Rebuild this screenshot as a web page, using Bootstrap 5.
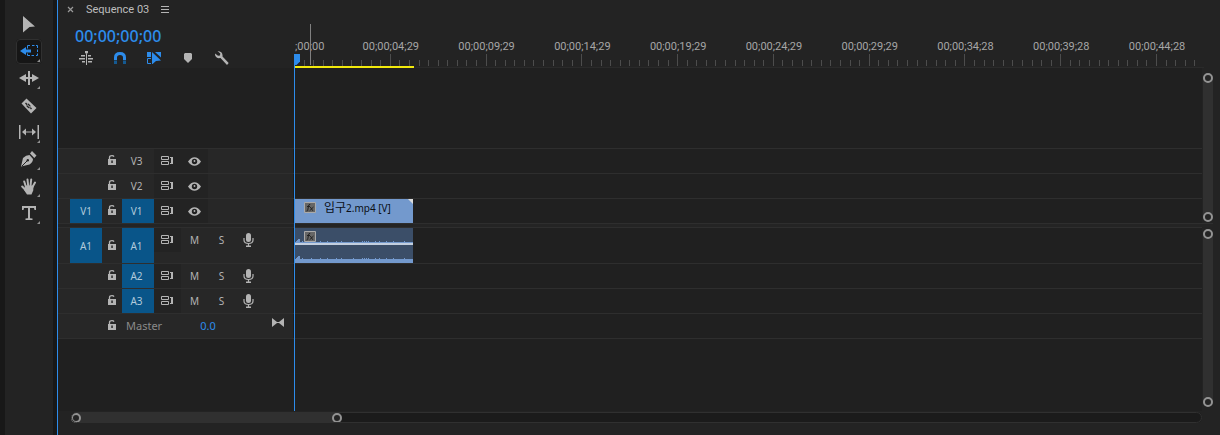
<!DOCTYPE html>
<html lang="en" data-bs-theme="dark">
<head>
<meta charset="utf-8">
<meta name="viewport" content="width=device-width, initial-scale=1">
<title>Sequence 03</title>
<link rel="stylesheet" href="https://cdn.jsdelivr.net/npm/bootstrap@5.3.0/dist/css/bootstrap.min.css">
<style>
:root{--panel:#232323;--lane:#202020;--edge:#2e2e2e;--ink:#b4b4b4;--blue:#2d8ceb;--target:#095589}
body{background:#181818;color:var(--ink);font:11px/16px "Noto Sans","Noto Sans CJK KR",sans-serif}
button{background:none;border:0;padding:0;color:inherit;display:flex;align-items:center;justify-content:center}
svg{display:block;fill:currentColor}
.tools{width:48px;margin:0 4px 0 5px;background:var(--panel);padding-top:12px;gap:2px}
.tool{width:26px;height:25px;border-radius:4px;position:relative}
.tool.active{background:#161616;outline:1px solid #303030;outline-offset:-1px;color:var(--blue)}
.tool.more::after{content:"";position:absolute;right:2px;bottom:2px;border:solid transparent;border-width:0 0 3px 3px;border-bottom-color:#909090}
.sequence{border-left:1px solid var(--blue);background:var(--panel);min-width:0}
.tabbar{height:18px;padding:1px 0 0 9px}
.tabbar a{color:#bdbdbd;font-family:Roboto,sans-serif}
.timeline{min-height:0}
.heads{width:236px}
.timecode{color:var(--blue);font-size:16px;font-weight:500;line-height:20px;padding:8px 0 0 17px}
.options{padding:3px 0 1px 11px}
.options button{width:34px;height:18px}
.on{color:var(--blue)}
.ruler{overflow:hidden;min-width:0;margin-right:16px;border-bottom:1px solid #2a2a2a}
.ticks{height:48px}
.tick{flex:1 1 0;border-left:1px solid #4c4c4c;height:6px;position:relative}
.tick.major{height:12px}
.tick time{position:absolute;bottom:11px;left:0;transform:translateX(-50%);white-space:nowrap;color:#a6a6a6;font-family:Roboto,sans-serif}
.tick:first-child time{transform:none}
.workbar{position:absolute;left:237px;top:48px;width:119px;height:2px;background:#f2ea0c}
.hover{position:absolute;left:252px;top:6px;width:1px;height:41px;background:#808080}
.playhead{position:absolute;left:236px;top:36px;bottom:0;width:1px;background:var(--blue)}
.playhead svg{color:var(--blue)}
.lanes{background:var(--lane);min-width:0}
.spare{height:80px}
.track{border-top:1px solid var(--edge);height:25px}
.track.tall{height:36px}
.track>.heads{display:grid;grid-template-columns:12px 32px 20px 32px 27px 27px 27px 27px 1fr;background:#272727;border-right:1px solid #1c1c1c}
.track button{color:var(--ink)}
.track .target{background:var(--target);color:#b2cadb}
.track .cell{height:24px}
.track .sync{background:var(--panel)}
.track .named,.track .letter{font-size:10px}
.track .name{padding-right:3px}
.divider{height:4px;border-top:1px solid var(--edge);background:#242424;margin-right:7px}
.clip{width:118px;margin-left:1px;position:relative;color:#0b0f16;background:#7399cd;overflow:hidden}
.clip .fx{position:absolute;left:9px;top:3px}
.clip span{padding-left:29px;line-height:17px;white-space:nowrap;font-size:10px}
.clip b{font-size:12px;font-weight:400}
.clip .corner{position:absolute;right:0;top:0}
.clip.audio{background:#3b4e68;color:#7399cd}
.master-name{color:#8a8a8a}
.side{width:18px;padding-left:1px}
.thumb{background:#303030;border-radius:6px}
.side .thumb{width:10px}
.side.top .thumb{margin:5px 0 1px}
.side.low .thumb{margin:2px 0 4px}
.knob{width:10px;height:10px;flex:none;border:2px solid #939393;border-radius:50%;background:#242424}
.hscroll{height:11px;margin:1px 18px 12px 13px;background:#1b1b1b;border-radius:6px;outline:1px solid #303030;outline-offset:-1px}
.hscroll .thumb{height:11px}
</style>
<script src="https://cdn.jsdelivr.net/npm/bootstrap@5.3.0/dist/js/bootstrap.bundle.min.js"></script>
</head>
<body class="d-flex vh-100 overflow-hidden">

<svg width="0" height="0" class="position-absolute" aria-hidden="true">
  <symbol id="lock" viewBox="0 0 10 12"><path d="M1 4h8v6H1z"/><path d="M2.500 4V2.500Q2.500.7 5 .7Q6.500.7 7 1.600" fill="none" stroke="currentColor" stroke-width="1.300"/><path d="M4.300 5.500h1.500v2.500H4.300z" fill="#272727"/></symbol>
  <symbol id="sync" viewBox="0 0 13 10"><path d="M.5.5h7v3h-7zM.5 5.500h7v3h-7z" fill="none" stroke="currentColor"/><path d="M9 1h3v7H9V7h1V2H9z"/></symbol>
  <symbol id="eye" viewBox="0 0 13 9"><path d="M0 4.500Q3 .2 6.500.2T13 4.500Q10 8.800 6.500 8.800T0 4.500z"/><circle cx="6.500" cy="4.500" r="2.700" fill="#202020"/><circle cx="6.500" cy="4" r=".9"/></symbol>
  <symbol id="mic" viewBox="0 0 11 14"><rect x="3" y="0" width="5" height="9" rx="2.500"/><path d="M1 5v2q0 3.500 4.500 3.500T10 7V5M5.500 10v3" fill="none" stroke="currentColor" stroke-width="1.200"/><path d="M3 12.500h5V14H3z"/></symbol>
  <symbol id="fx" viewBox="0 0 12 11"><path d="M.5.5h11v10H.5z" fill="#666" stroke="#aaa"/><path d="M6.200 2.500Q4.800 2 4.500 4L3.700 8.500Q3.400 9.300 2.500 9M3 4.500h3M6.300 5l2.500 3.800M9.500 5L5.600 8.800" fill="none" stroke="#222"/></symbol>
</svg>

<nav class="tools d-flex flex-column align-items-center flex-shrink-0" aria-label="Tools">
  <button class="tool" aria-label="Selection"><svg width="12" height="17" viewBox="0 0 12 17"><path d="M0 0L12 10.500L6.500 11L0 16.500z"/></svg></button>
  <button class="tool active more" aria-label="Track select backward"><svg width="18" height="13" viewBox="0 0 18 13"><path d="M0 6l6-4v2.500h5v3H6V10z"/><path d="M7.500 3.500V.5H10M12 .5h2.500M16 .5h1.500V3M17.500 4.500V7M17.500 8.500v2H16M14 10.500h-2.500M10 10.500H7.500v-2" fill="none" stroke="currentColor"/></svg></button>
  <button class="tool more" aria-label="Ripple edit"><svg width="20" height="15" viewBox="0 0 20 15"><path d="M9 0h2v14H9zM0 7l7-4v3h2v2H7v3zM20 7l-7-4v3h-2v2h2v3z"/></svg></button>
  <button class="tool" aria-label="Razor"><svg width="16" height="16" viewBox="0 0 16 16"><path d="M.5 5.500L5.500.5L15.500 10L10 15.500z"/><path d="M4 5.500l1-1 1.500 1.500 1-.5 2 2-.3 1L11 10.500l-1 1-1.600-1.600-1 .3-2-2 .3-1z" fill="#262626"/><path d="M6 6.500L9.500 9.800" stroke="currentColor"/></svg></button>
  <button class="tool more" aria-label="Slip"><svg width="20" height="15" viewBox="0 0 20 15"><path d="M0 0h1.500v14H0zM18.500 0H20v14h-1.500zM3 7l4-3.500v3h6v-3l4 3.500-4 3.500v-3H7v3z"/></svg></button>
  <button class="tool more" aria-label="Pen"><svg width="16" height="17" viewBox="0 0 16 17"><path d="M0 15.500L2 7Q5 4 8.500 4L12 8Q12 11 8.500 13.500zM9 2.500L11 0l4.500 4.500-2.200 2.500z"/><path d="M1 15L6 10" stroke="#232323"/><circle cx="6.800" cy="9.200" r="1.200" fill="#232323"/></svg></button>
  <button class="tool more" aria-label="Hand"><svg width="16" height="17" viewBox="0 0 16 17"><path d="M5 9L3.200 3.500M7.200 8L6.500 1.500M9.500 8L10.200 1.500M11.500 9L14 4.500M5 12.500L1.200 8.500" stroke="currentColor" stroke-width="2" stroke-linecap="round"/><path d="M4.200 7.500h8.400l-.4 5L10.500 16.500H6L3 12z"/></svg></button>
  <button class="tool more" aria-label="Type"><svg width="14" height="15" viewBox="0 0 14 15"><path d="M0 0h14v4h-1.500l-.5-2H8v10.200l2.500.4V14h-7v-1.400L6 12.200V2H2L1.500 4H0z"/></svg></button>
</nav>

<main class="sequence d-flex flex-column flex-grow-1">
  <div class="tabbar d-flex align-items-center">
    <button aria-label="Close"><svg width="7" height="7" viewBox="0 0 7 7"><path d="M1 1l5 5M6 1L1 6" stroke="#999" stroke-width="1.200"/></svg></button>
    <a href="#" class="text-decoration-none ms-2 ps-1">Sequence 03</a>
    <button class="ms-2 ps-1" aria-label="Panel menu"><svg width="8" height="7" viewBox="0 0 8 7"><path d="M0 0h8v1H0zM0 3h8v1H0zM0 6h8v1H0z"/></svg></button>
  </div>

  <div class="timeline d-flex flex-column flex-grow-1 position-relative">
    <div class="d-flex">
      <div class="heads flex-shrink-0">
        <div class="timecode">00;00;00;00</div>
        <div class="options d-flex">
          <button aria-label="Insert as nest"><svg width="14" height="14" viewBox="0 0 14 14"><path d="M7 1h1v13H7zM6 0h3v2l-1.500 1L6 2zM2 4h4v1.500H2zM0 7h6v1.500H0zM3 10h3v1.500H3zM9 4h3v1.500H9zM9 7h5v1.500H9zM9 10h4v1.500H9z"/></svg></button>
          <button class="on" aria-label="Snap"><svg width="12" height="12" viewBox="0 0 12 12"><path d="M1.500 8V5.500Q1.500 1.500 6 1.500T10.500 5.500V8" fill="none" stroke="currentColor" stroke-width="3"/><path d="M0 8.500h3V12H0zM9 8.500h3V12H9z" fill="#155a92"/></svg></button>
          <button class="on" aria-label="Linked selection"><svg width="14" height="12" viewBox="0 0 14 12"><path d="M0 0h4v5H0zM5 0L14 8.500l-5 .5-4 3.500zM7 0h7v5.500L8 0z"/><path d="M4 6.500H.5v5H4" fill="none" stroke="currentColor"/></svg></button>
          <button aria-label="Add marker"><svg width="8" height="10" viewBox="0 0 8 10"><path d="M1 0h6l1 1v5L4 10L0 6V1z"/></svg></button>
          <button aria-label="Timeline settings"><svg width="14" height="14" viewBox="0 0 14 14"><path d="M2.500 0l2.800 2.500-.3 2-2 .3L0 2.500Q-.2 6.500 3.500 7.200L5.500 7l6.500 7 1.700-2L7.500 5.500Q8.200.5 2.500 0z"/></svg></button>
        </div>
      </div>
      <div class="ruler flex-grow-1"><div class="ticks d-flex align-items-end" id="ticks"></div></div>
    </div>

    <section class="d-flex" aria-label="Video tracks">
      <div class="lanes flex-grow-1" id="video"><div class="spare"></div></div>
      <div class="side top d-flex"><div class="thumb d-flex flex-column justify-content-between"><button class="knob" aria-label="Video zoom top"></button><button class="knob" aria-label="Video zoom bottom"></button></div></div>
    </section>
    <div class="divider"></div>
    <section class="d-flex flex-grow-1" aria-label="Audio tracks">
      <div class="lanes flex-grow-1" id="audio"></div>
      <div class="side low d-flex"><div class="thumb d-flex flex-column justify-content-between"><button class="knob" aria-label="Audio zoom top"></button><button class="knob" aria-label="Audio zoom bottom"></button></div></div>
    </section>

    <div class="workbar"></div>
    <div class="hover"></div>
    <div class="playhead"><svg width="6" height="11" viewBox="0 0 6 11"><path d="M0 0h6v7.500L2.500 11H0z"/></svg></div>
  </div>

  <div class="hscroll"><div class="thumb d-flex align-items-center justify-content-between" style="width:24%"><button class="knob" aria-label="Zoom left edge"></button><button class="knob" aria-label="Zoom right edge"></button></div></div>
</main>

<script>
const use = (id, w, h) => `<svg width="${w}" height="${h}"><use href="#${id}"/></svg>`;

// ruler: one major tick every ten divisions
const labels = [';00;00','00;00;04;29','00;00;09;29','00;00;14;29','00;00;19;29','00;00;24;29','00;00;29;29','00;00;34;28','00;00;39;28','00;00;44;28'];
let ticks = '';
for (let i = 0; i < 95; i++) {
  ticks += i % 10 ? '<i class="tick"></i>' : `<i class="tick major fst-normal"><time>${labels[i / 10]}</time></i>`;
}
document.getElementById('ticks').innerHTML = ticks;

// waveform peaks as [position, height]
const peaks = [[1,1],[2,2],[3,3],[7,1],[16,1],[25,1],[32,1],[41,1],[46,1],[58,1],[67,1],[69,1],[71,1],[73,1],[80,1],[84,1],[91,1],[98,1],[109,1]];
const wave = base => peaks.map(([x, h]) => `<path d="M${x} ${base - h}h${h > 1 ? 2 : 1}v${h}h${h > 1 ? -2 : -1}z"/>`).join('');
const videoClip = `<div class="clip"><svg class="fx" width="12" height="11"><use href="#fx"/></svg><span><b>입구</b>2.mp4 [V]</span><svg class="corner" width="5" height="5"><path d="M0 0h5v5z" fill="#ddd"/></svg></div>`;
const audioClip = `<div class="clip audio"><svg width="118" height="35">${wave(14)}<path d="M0 14h118v1H0z"/><path d="M0 15h118v2H0z" fill="#c3cfdf"/>${wave(31)}<path d="M0 31h118v4H0z"/></svg><svg class="fx" width="12" height="11"><use href="#fx"/></svg></div>`;

function track(name, {source = '', target = false, audio = false, tall = false, clip = ''} = {}) {
  const box = source ? `<button class="target named">${source}</button>` : '<i></i>';
  const tail = audio
    ? `<button class="cell letter" aria-label="Mute ${name}">M</button><button class="cell letter" aria-label="Solo ${name}">S</button><button class="cell" aria-label="Record ${name}">${use('mic', 11, 14)}</button>`
    : `<button class="cell sync" aria-label="Show ${name}">${use('eye', 13, 9)}</button>`;
  return `<div class="track d-flex ${tall ? 'tall' : ''}"><div class="heads flex-shrink-0"><i></i>${box}<button aria-label="Lock ${name}">${use('lock', 10, 12)}</button><button class="named name ${target ? 'target' : ''}">${name}</button><button class="cell sync" aria-label="Sync lock ${name}">${use('sync', 13, 10)}</button>${tail}</div>${clip}</div>`;
}
document.getElementById('video').insertAdjacentHTML('beforeend',
  track('V3') + track('V2') + track('V1', {source: 'V1', target: true, clip: videoClip}));
document.getElementById('audio').innerHTML =
  track('A1', {source: 'A1', target: true, audio: true, tall: true, clip: audioClip}) +
  track('A2', {target: true, audio: true}) + track('A3', {target: true, audio: true}) +
  `<div class="track d-flex"><div class="heads flex-shrink-0"><i></i><i></i><button aria-label="Lock Master">${use('lock', 10, 12)}</button>
   <div class="d-flex align-items-center master-name" style="grid-column:span 2"><span class="ps-1">Master</span></div>
   <a href="#" class="on text-decoration-none d-flex align-items-center justify-content-center" style="grid-column:span 2">0.0</a><i></i>
   <button class="cell align-items-start pt-1" aria-label="Master keyframes"><svg width="12" height="9" viewBox="0 0 12 9"><path d="M0 0l5 4h2l5-4v9L7 5H5L0 9z"/></svg></button></div></div><div class="track"></div>`;
</script>
</body>
</html>
